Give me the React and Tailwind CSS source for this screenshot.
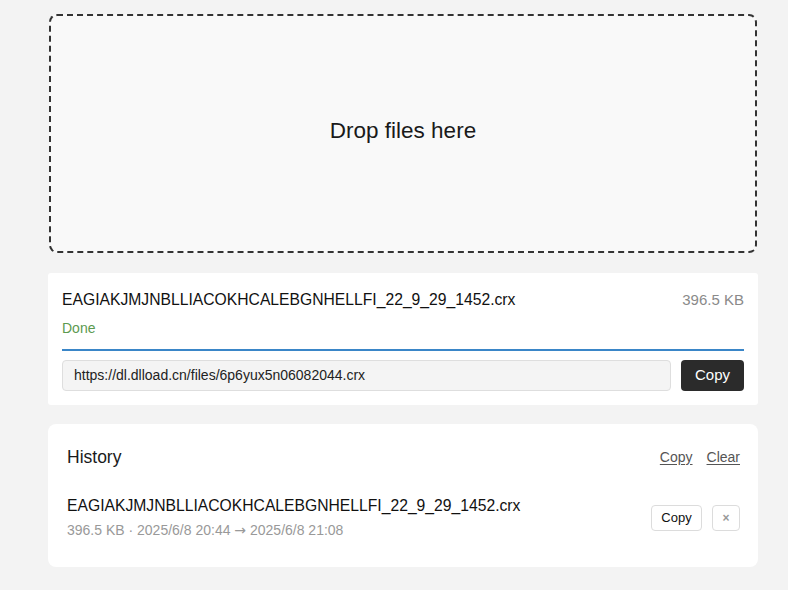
import React from "react";

export default function App() {
  const fileName = "EAGIAKJMJNBLLIACOKHCALEBGNHELLFI_22_9_29_1452.crx";

  return (
    <div
      className="min-h-screen bg-[#f3f3f3] pl-[48px] pr-[30px] pt-[14px] pb-6"
      style={{ fontFamily: '"Liberation Sans", Arial, sans-serif' }}
    >
      {/* Drop zone */}
      <div className="h-[239px] mx-[1px] rounded-[8px] border-2 border-dashed border-[#333] bg-[#f9f9f9] flex items-center justify-center">
        <span className="text-[22.5px] leading-[28px] text-[#1a1a1a] -mt-[6px]">Drop files here</span>
      </div>

      {/* Current upload */}
      <div className="mt-[20px] bg-white rounded-[3px] px-[14px] pt-[16px] pb-[14px]">
        <div className="flex items-center justify-between leading-[22px]">
          <span className="text-[15.7px] text-[#111]">{fileName}</span>
          <span className="text-[15px] text-[#8a8a8a]">396.5 KB</span>
        </div>
        <div className="mt-[7px] text-[14px] leading-[20px] text-[#5c9a4f]">Done</div>
        <div className="mt-[11px] h-[2px] bg-[#3a86c8]" />
        <div className="mt-[9px] flex items-center gap-[10px]">
          <div className="flex-1 h-[31px] rounded-[4px] border border-[#dedede] bg-[#f4f4f4] px-[11px] flex items-center text-[14px] text-[#222]">
            https://dl.dlload.cn/files/6p6yux5n06082044.crx
          </div>
          <button className="h-[31px] w-[63px] rounded-[4px] bg-[#2b2b2b] text-white text-[15px]">
            Copy
          </button>
        </div>
      </div>

      {/* History */}
      <div className="mt-[19px] bg-white rounded-[8px] pl-[19px] pr-[18px] pt-[21px] pb-[27px]">
        <div className="flex items-center justify-between leading-[24px]">
          <span className="text-[17.5px] text-[#1a1a1a]">History</span>
          <div className="flex items-center gap-[14px] text-[14px] text-[#555]">
            <button className="underline underline-offset-2">Copy</button>
            <button className="underline underline-offset-2">Clear</button>
          </div>
        </div>
        <div className="mt-[26px] flex items-center justify-between">
          <div>
            <div className="text-[15.7px] leading-[22px] text-[#111]">{fileName}</div>
            <div className="mt-[3px] text-[14px] leading-[20px] text-[#999]">
              396.5 KB · 2025/6/8 20:44{" "}
              <span style={{ fontFamily: '"DejaVu Sans", sans-serif' }} className="text-[14px]">
                →
              </span>{" "}
              2025/6/8 21:08
            </div>
          </div>
          <div className="flex items-center gap-[10px]">
            <button className="h-[26px] w-[51px] rounded-[4px] border border-[#dcdcdc] bg-white text-[13px] text-[#111]">
              Copy
            </button>
            <button className="h-[26px] w-[28px] rounded-[4px] border border-[#dcdcdc] bg-white text-[12px] font-bold text-[#999]">
              ×
            </button>
          </div>
        </div>
      </div>
    </div>
  );
}
